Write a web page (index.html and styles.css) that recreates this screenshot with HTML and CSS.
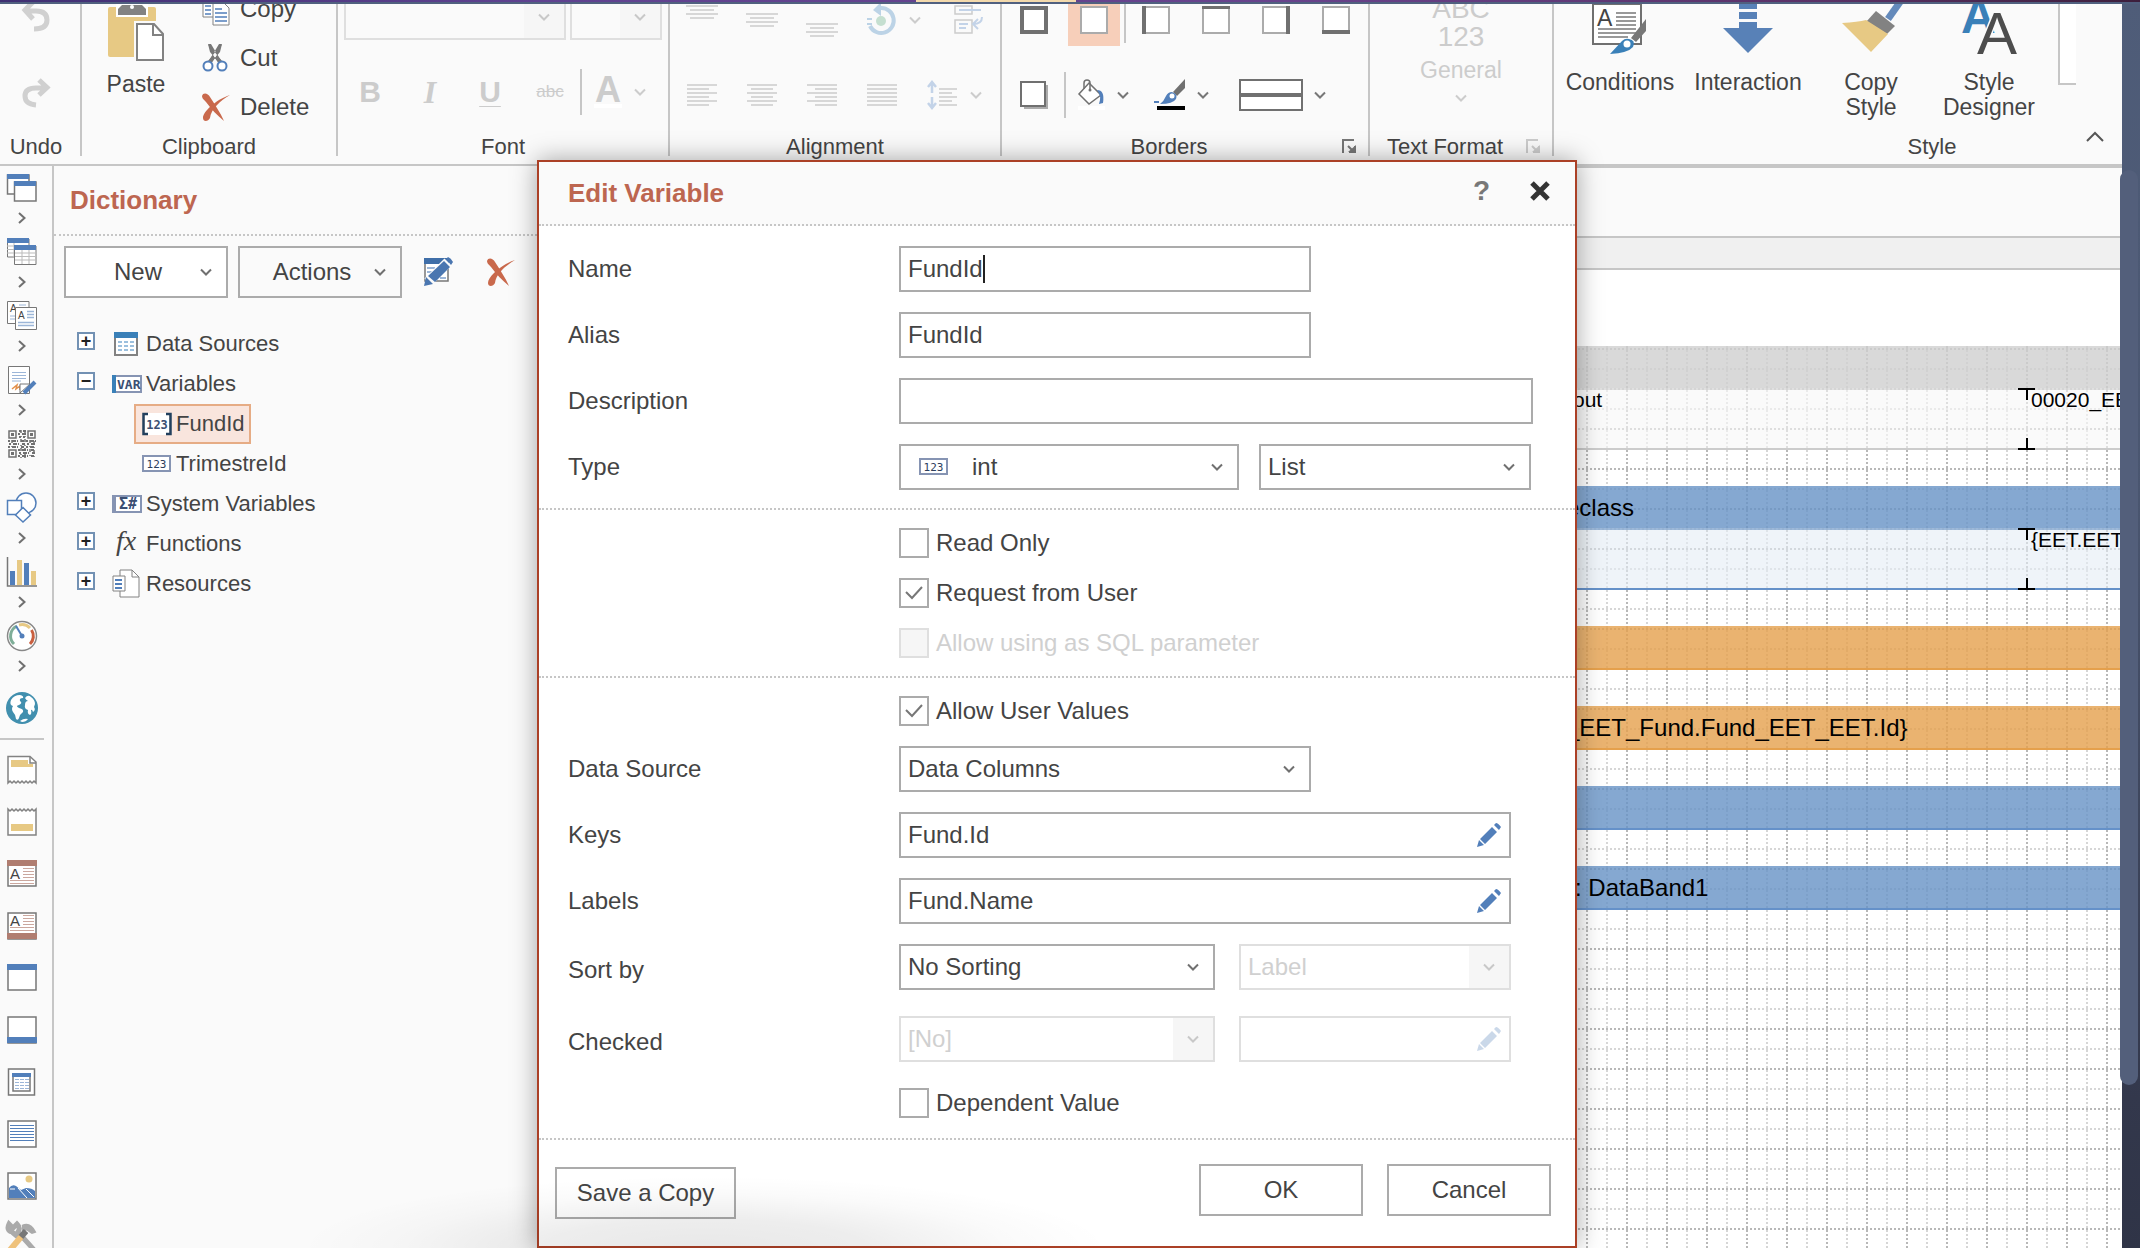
FILE: index.html
```html
<!DOCTYPE html>
<html lang="en">
<head>
<meta charset="utf-8">
<title>Report Designer</title>
<link rel="stylesheet" href="styles.css">
</head>
<body>
<svg class="defs" aria-hidden="true">
  <symbol id="down" viewBox="0 0 12 8"><path d="M1 1.500 6 6.500 11 1.500" fill="none" stroke="currentColor" stroke-width="2"/></symbol>
  <symbol id="right" viewBox="0 0 8 12"><path d="M1 1 6.500 6 1 11" fill="none" stroke="currentColor" stroke-width="2"/></symbol>
  <symbol id="cross" viewBox="0 0 28 28"><path d="M0 3C1-1 6 0 8 4 13 12 18 19 22 28 15 22 9 16 4 9 1 6 0 5 0 3Z" fill="#c9694c"/><path d="M28 2C18 8 9 16 8 25 6 29 1 29 1 25 1 19 13 7 28 2Z" fill="#c9694c"/></symbol>
  <symbol id="pencil" viewBox="0 0 24 24"><path d="M17 2 19 0Q21 0 24 4L22 7ZM15 4 20 9 8 21 3 16ZM2 17 7 22 0 24Z" fill="#527fba"/></symbol>
  <symbol id="launch" viewBox="0 0 14 14"><path d="M1 14V1H12M6 7 11 12M13 7V13H7" fill="none" stroke="currentColor" stroke-width="2"/><path d="M6 13H14V6Z" fill="currentColor"/></symbol>
  <symbol id="int" viewBox="0 0 30 18"><rect x="1" y="1" width="27" height="15" fill="#fff" stroke="#8694b3" stroke-width="2"/><text x="14.500" y="13" text-anchor="middle" font-family="DejaVu Sans Mono, monospace" font-size="11" fill="#2d3e5c">123</text></symbol>
</svg>

<div class="topline"><span class="tab-mark"></span></div>
<div class="app">
<header class="ribbon">
 <div class="groups">
  <section class="group g-undo">
    <div class="col undo-col">
      <button class="tool" aria-label="Undo" disabled><svg width="28" height="44" viewBox="0 0 28 44"><path d="M13 12 3 22 11 31M3 23H14Q25 23 25 32T12 41" fill="none" stroke="#d0d0d0" stroke-width="5"/></svg></button>
      <button class="tool" aria-label="Redo" disabled><svg width="28" height="28" viewBox="0 0 28 28"><path d="M17 1 25 8.500 17 16M25 9H14Q3 9 3 17T14 26" fill="none" stroke="#d0d0d0" stroke-width="5"/></svg></button>
    </div>
    <h2>Undo</h2>
  </section>
  <section class="group g-clip">
    <div class="row">
      <button class="big paste"><svg width="64" height="64" viewBox="0 0 64 64"><rect x="4" y="7" width="48" height="50" rx="2" fill="#e7c984"/><path d="M12 0H44V17H12Z" fill="#fff"/><path d="M14 15V9L18 5H38L42 9V15Z" fill="#828282"/><circle cx="28" cy="7" r="2" fill="#fff"/><path d="M30 21H64V64H30Z" fill="#fafafa"/><path d="M33 24H50L59 34V60H33Z" fill="#fff" stroke="#828282" stroke-width="2"/><path d="M49 24V35H59" fill="none" stroke="#828282" stroke-width="2"/></svg><span>Paste</span></button>
      <div class="col clip-col">
        <button class="tool wide"><svg width="28" height="32" viewBox="0 0 28 32"><g fill="#fff" stroke="#828282"><path d="M1 2H12L16 6V24H1Z"/><path d="M11 10H22L27 15V32H11Z"/></g><path d="M3 9H9M3 13H9M3 17H9M3 21H9M13 16H20M13 20H25M13 24H25M13 28H25" stroke="#527fba" stroke-width="1.500"/></svg>Copy</button>
        <button class="tool wide"><svg width="28" height="28" viewBox="0 0 28 28"><path d="M6 0 11 11 17 20H21L9 0ZM20 0 15 11 9 20H5L17 0Z" fill="#777"/><path d="M6 0 8 8 18 20 20 17ZM20 0 18 8 8 20 6 17Z" fill="#777"/><g fill="#fff" stroke="#527fba" stroke-width="2"><circle cx="6" cy="22" r="4.500"/><circle cx="20" cy="22" r="4.500"/></g></svg>Cut</button>
        <button class="tool wide"><svg width="28" height="28"><use href="#cross"/></svg>Delete</button>
      </div>
    </div>
    <h2>Clipboard</h2>
  </section>
  <section class="group g-font">
    <div class="row combos">
      <select class="off font-name" aria-label="Font name" disabled></select>
      <select class="off font-size" aria-label="Font size" disabled></select>
    </div>
    <div class="row cells off-tools">
      <button class="cell bold" disabled>B</button>
      <button class="cell italic" disabled>I</button>
      <button class="cell under" disabled>U</button>
      <button class="cell strike" disabled>abc</button>
      <span class="bar"></span>
      <button class="cell color" disabled><span class="letter">A</span><svg width="12" height="8"><use href="#down"/></svg></button>
    </div>
    <h2>Font</h2>
  </section>
  <section class="group g-align">
    <div class="row cells first off-tools">
      <button class="cell" aria-label="Align top" disabled><svg width="32" height="36" viewBox="0 0 32 36"><path d="M0 4H32M4 8H28M0 12H32M4 16H28" stroke="#ccc" stroke-width="1.500"/></svg></button>
      <button class="cell" aria-label="Align middle" disabled><svg width="32" height="36" viewBox="0 0 32 36"><path d="M0 12H32M4 16H28M0 20H32M4 24H28" stroke="#ccc" stroke-width="1.500"/></svg></button>
      <button class="cell" aria-label="Align bottom" disabled><svg width="32" height="36" viewBox="0 0 32 36"><path d="M0 22H32M4 26H28M0 30H32M4 34H28" stroke="#ccc" stroke-width="1.500"/></svg></button>
      <button class="cell duo" aria-label="Angle" disabled><svg width="28" height="32" viewBox="0 0 28 32"><path d="M14 4A12.500 12.500 0 1 1 3 22" fill="none" stroke="#bcd3e6" stroke-width="4"/><path d="M14-2V12L6 6ZM0 14H5V16H0ZM0 19H5V21H0Z" fill="#bcd3e6"/><circle cx="14" cy="17" r="5" fill="#c5dfd0"/></svg><svg width="12" height="8"><use href="#down"/></svg></button>
      <button class="cell" aria-label="Word wrap" disabled><svg width="30" height="30" viewBox="0 0 30 30"><path d="M1 1H18V9H1ZM1 15H18V28H1Z" fill="none" stroke="#ccc" stroke-width="1.500"/><path d="M5 5H27M5 19H14M5 23H12M28 12Q28 19 19 19M24 14 19 19 24 24" fill="none" stroke="#c3d3e8" stroke-width="2"/></svg></button>
    </div>
    <div class="row cells second off-tools">
      <button class="cell" aria-label="Align left" disabled><svg width="30" height="22" viewBox="0 0 30 22"><path d="M0 1H30M0 5H22M0 9H30M0 13H22M0 17H30M0 21H22" stroke="#ccc" stroke-width="1.500"/></svg></button>
      <button class="cell" aria-label="Align center" disabled><svg width="30" height="22" viewBox="0 0 30 22"><path d="M0 1H30M4 5H26M0 9H30M4 13H26M0 17H30M4 21H26" stroke="#ccc" stroke-width="1.500"/></svg></button>
      <button class="cell" aria-label="Align right" disabled><svg width="30" height="22" viewBox="0 0 30 22"><path d="M0 1H30M8 5H30M0 9H30M8 13H30M0 17H30M8 21H30" stroke="#ccc" stroke-width="1.500"/></svg></button>
      <button class="cell" aria-label="Justify" disabled><svg width="30" height="22" viewBox="0 0 30 22"><path d="M0 1H30M0 5H30M0 9H30M0 13H30M0 17H30M0 21H30" stroke="#ccc" stroke-width="1.500"/></svg></button>
      <button class="cell duo" aria-label="Line spacing" disabled><svg width="30" height="28" viewBox="0 0 30 28"><path d="M5 2V12M5 16V26M1 6 5 1 9 6M1 22 5 27 9 22" fill="none" stroke="#c3d3e8" stroke-width="2.500"/><path d="M12 8H30M12 12H25M12 16H30M12 20H25M12 24H30" stroke="#ccc" stroke-width="1.500"/></svg><svg width="12" height="8"><use href="#down"/></svg></button>
    </div>
    <h2>Alignment</h2>
  </section>
  <section class="group g-borders">
    <div class="row cells first">
      <button class="cell" aria-label="All borders"><svg width="28" height="28"><rect x="2" y="2" width="24" height="24" fill="#fff" stroke="#707070" stroke-width="4"/></svg></button>
      <button class="cell on" aria-label="No borders"><svg width="28" height="28"><rect x="1" y="1" width="26" height="26" fill="#fff" stroke="#ababab" stroke-width="2"/></svg></button>
      <span class="bar"></span>
      <button class="cell" aria-label="Left border"><svg width="28" height="28"><rect x="1" y="1" width="26" height="26" fill="#fff" stroke="#ababab" stroke-width="2"/><path d="M0 0H4V28H0Z" fill="#707070"/></svg></button>
      <button class="cell" aria-label="Top border"><svg width="28" height="28"><rect x="1" y="1" width="26" height="26" fill="#fff" stroke="#ababab" stroke-width="2"/><path d="M0 0H28V3H0Z" fill="#707070"/></svg></button>
      <button class="cell" aria-label="Right border"><svg width="28" height="28"><rect x="1" y="1" width="26" height="26" fill="#fff" stroke="#ababab" stroke-width="2"/><path d="M24 0H28V28H24Z" fill="#707070"/></svg></button>
      <button class="cell" aria-label="Bottom border"><svg width="28" height="28"><rect x="1" y="1" width="26" height="26" fill="#fff" stroke="#ababab" stroke-width="2"/><path d="M0 24H28V28H0Z" fill="#707070"/></svg></button>
    </div>
    <div class="row cells second">
      <button class="cell" aria-label="Shadow"><svg width="28" height="28"><path d="M4 4H28V28H4Z" fill="#ababab"/><rect x="1" y="1" width="24" height="24" fill="#fff" stroke="#707070" stroke-width="2"/></svg></button>
      <span class="bar"></span>
      <button class="cell duo fill" aria-label="Fill colour"><svg width="28" height="32" viewBox="0 0 28 32"><path d="M0 27H27V31H0Z" fill="#fff"/><path d="M11 4 23 16 11 25 1 15Z" fill="#fff" stroke="#707070" stroke-width="1.500"/><path d="M6 10V4Q6 1 9 1T12 4V11" fill="none" stroke="#707070" stroke-width="1.500"/><circle cx="12" cy="11" r="1.500" fill="#707070"/><path d="M19 11Q27 11 25 24L21 25Q24 17 19 11Z" fill="#527fba"/></svg><svg width="12" height="8"><use href="#down"/></svg></button>
      <button class="cell duo pen" aria-label="Border colour"><svg width="32" height="32" viewBox="0 0 32 32"><path d="M3 27H31V31H3Z"/><path d="M31 0V9L23 17 19 13Z" fill="#707070"/><path d="M18 13Q24 15 22 20 19 25 6 25 10 22 12 17 14 13 18 13ZM0 22H5V24H0Z" fill="#527fba"/><circle cx="18" cy="17" r="2.500" fill="#fff"/></svg><svg width="12" height="8"><use href="#down"/></svg></button>
      <button class="cell duo line-style" aria-label="Border style"><svg width="64" height="32"><rect x="1" y="1" width="62" height="30" fill="#fff" stroke="#707070" stroke-width="2"/><path d="M1 14H63V18H1Z" fill="#707070"/></svg><svg width="12" height="8"><use href="#down"/></svg></button>
    </div>
    <h2>Borders</h2>
    <button class="launch" aria-label="Border settings"><svg width="14" height="14"><use href="#launch"/></svg></button>
  </section>
  <section class="group g-format">
    <button class="format off-tools" disabled><span class="abc">ABC<br>123</span><span>General</span><svg width="12" height="8"><use href="#down"/></svg></button>
    <h2>Text Format</h2>
    <button class="launch off-tools" aria-label="Format settings" disabled><svg width="14" height="14"><use href="#launch"/></svg></button>
  </section>
  <section class="group g-style">
    <div class="row">
      <button class="big w1"><svg width="64" height="64" viewBox="0 0 64 64"><rect x="5" y="6" width="48" height="40" fill="#fff" stroke="#707070" stroke-width="2"/><text x="9" y="28" font-family="Liberation Sans, sans-serif" font-size="23" fill="#444">A</text><path d="M28 15H48M28 19H48M28 23H48M28 27H48M10 31H48M10 35H48M10 39H40" stroke="#999" stroke-width="2"/><path d="M58 21V33L48 44 43 40Z" fill="#777"/><path d="M41 41Q48 42 45 49 40 55 22 56L34 43Q37 40 41 41Z" fill="#3a80b8"/><circle cx="39" cy="46" r="3.500" fill="#fff"/></svg><span>Conditions</span></button>
      <button class="big w1"><svg width="64" height="64" viewBox="0 0 64 64"><path d="M23 0H41V11H23ZM23 14H41V21H23ZM23 24H41V30H57L32 55 7 30H23Z" fill="#5881b7"/></svg><span>Interaction</span></button>
      <button class="big w2"><svg width="64" height="64" viewBox="0 0 64 64"><path d="M49 21 61 4" stroke="#648abb" stroke-width="7"/><path d="M37 13 56 28 48 36 27 24Z" fill="#828282"/><path d="M3 25Q19 24 27 22L49 36 32 54Z" fill="#e7c984"/></svg><span>Copy<br>Style</span></button>
      <button class="big w2"><svg width="64" height="64" viewBox="0 0 64 64"><g font-family="Liberation Sans, sans-serif"><text x="4" y="35" font-size="48" font-weight="bold" fill="#3a80b8">A</text><text x="20" y="56" font-size="60" fill="#4d4d4d" stroke="#fafafa" stroke-width="3" paint-order="stroke">A</text></g></svg><span>Style<br>Designer</span></button>
      <div class="gallery"></div>
    </div>
    <h2>Style</h2>
    <button class="collapse" aria-label="Collapse ribbon"><svg width="18" height="10"><path d="M1 9 9 1 17 9" fill="none" stroke="#555" stroke-width="2"/></svg></button>
  </section>
 </div>
</header>

<div class="work">
 <nav class="toolbox" aria-label="Toolbox">
  <button class="pop" aria-label="Bands"><svg width="32" height="32"><g fill="#fff" stroke="#777" stroke-width="1.500"><path d="M1.500 3H23V22H1.500Z"/><path d="M8.500 10H30V29H8.500Z"/></g><path d="M1 2H23V7H1ZM8 9H30V14H8Z" fill="#527fba"/></svg><svg class="arr" width="8" height="12"><use href="#right"/></svg></button>
  <button class="pop" aria-label="Cross bands"><svg width="32" height="32"><g fill="#fff" stroke="#777"><path d="M1.500 3H23V21H1.500Z"/><path d="M1 10H23M1 13.500H23M1 17H23M8 6V21" stroke="#bbb"/><path d="M8.500 10H30V28.500H8.500Z"/><path d="M9 17H30M9 20.500H30M9 24H30M16 14V28M23 14V28" stroke="#bbb"/></g><path d="M1 2H23V7H1ZM8 9H30V14H8Z" fill="#527fba"/></svg><svg class="arr" width="8" height="12"><use href="#right"/></svg></button>
  <button class="pop" aria-label="Components"><svg width="32" height="32"><g font-family="Liberation Sans, sans-serif" font-size="10" fill="#444"><path d="M1.500 1.500H23V23.500H1.500Z" fill="#fff" stroke="#777"/><text x="4" y="12">A</text><path d="M13 5H20M4 16H9M4 19H9" stroke="#9cb6d8"/><path d="M9.500 7.500H30.500V29.500H9.500Z" fill="#fff" stroke="#777"/><text x="12" y="19">A</text></g><path d="M21 11.500H28M21 14.500H28M21 17.500H28M12 22.500H28M12 25.500H28" stroke="#9cb6d8" stroke-width="1.500"/></svg><svg class="arr" width="8" height="12"><use href="#right"/></svg></button>
  <button class="pop" aria-label="Signatures"><svg width="32" height="32"><path d="M2.500 2.500H23.500V29.500H2.500Z" fill="#fff" stroke="#777"/><path d="M6 8.500H20M6 11.500H20M6 14.500H20M6 17H15" stroke="#9cb6d8"/><path d="M6 25 11 21 10 25 14 22V26" fill="none" stroke="#e3904a" stroke-width="1.500"/><path d="M14 20H24L14 29Z" fill="#fff" stroke="#777"/><path d="M29 18 18 29" stroke="#527fba" stroke-width="4"/></svg><svg class="arr" width="8" height="12"><use href="#right"/></svg></button>
  <button class="pop" aria-label="Barcodes"><svg width="32" height="32"><g fill="none" stroke="#707070"><path d="M3 3H10V10H3ZM22 3H29V10H22ZM3 22H10V29H3Z" stroke-width="1.500"/><path d="M6.500 5V8M25.500 5V8M6.500 24V27" stroke-width="3"/><path stroke-width="2" stroke-dasharray="2 2 4 1 1 3 3 2" d="M13 3H20M12 6H20M13 9H19M2 13H30M3 16H30M2 19H29M12 22H30M13 25H29M12 28H30"/><path stroke-width="1.500" stroke-dasharray="3 3 1 2" d="M15 2V30M19 2V30M24 12V30M28 13V30M6 12V20"/></g></svg><svg class="arr" width="8" height="12"><use href="#right"/></svg></button>
  <button class="pop" aria-label="Shapes"><svg width="32" height="32"><g fill="#fff" stroke="#527fba" stroke-width="1.500"><circle cx="20" cy="11" r="10"/><path d="M1.500 8.500H15.500V22.500H1.500Z"/><path d="M17 15.500 24.500 23 17 30 9.500 23Z"/></g></svg><svg class="arr" width="8" height="12"><use href="#right"/></svg></button>
  <button class="pop" aria-label="Charts"><svg width="32" height="32"><path d="M4 15H9V29H4ZM18 7H23V29H18Z" fill="#527fba"/><path d="M11 4H16V29H11ZM25 15H30V29H25Z" fill="#e7c984"/><path d="M1.500 1V30H31" fill="none" stroke="#777" stroke-width="1.500"/></svg><svg class="arr" width="8" height="12"><use href="#right"/></svg></button>
  <button class="pop" aria-label="Gauges"><svg width="32" height="32"><circle cx="16" cy="16" r="14.500" fill="#fff" stroke="#888" stroke-width="1.500"/><g fill="none" stroke-width="3"><path d="M8 24A11 11 0 0 1 11 6" stroke="#7fae98"/><path d="M13 5A11 11 0 0 1 24 8" stroke="#e7c984"/><path d="M25.500 10A11 11 0 0 1 24 24" stroke="#c95f3f"/></g><path d="M10 6 16 16" stroke="#527fba" stroke-width="2"/><circle cx="16" cy="16" r="2.500" fill="#527fba"/></svg><svg class="arr" width="8" height="12"><use href="#right"/></svg></button>
  <button class="globe" aria-label="Map"><svg width="32" height="32"><circle cx="16" cy="16" r="16" fill="#418fae"/><path d="M5 8Q8 3 14 3 18 4 17 6 13 6 14 9 17 11 13 13 9 14 13 16 18 17 17 20 14 22 13 26 12 29 10 27 10 23 7 20 5 17 7 14 3 13 5 8ZM19 6Q22 2 25 5 29 8 29 12L28 15Q30 18 27 20 26 17 25 18 26 22 24 23 21 22 22 18 18 17 19 13 19 9 22 9 20 8 19 6ZM14 29 Q18 26 22 27 20 30 16 30Z" fill="#fff"/></svg></button>
  <hr>
  <button class="one" aria-label="Report title"><svg width="32" height="32"><path d="M2 29 4 27 6 29 8 27 10 29 12 27 14 29 16 27 18 29 20 27 22 29 24 27 26 29 28 27 30 29V8L24 2.500H2Z" fill="#fff" stroke="#828282" stroke-width="1.500"/><path d="M5 6H22V10H27V13H5Z" fill="#e7c984"/><path d="M24 3V9H30" fill="none" stroke="#828282" stroke-width="1.500"/></svg></button>
  <button class="one" aria-label="Report summary"><svg width="32" height="32"><path d="M2 3 4 5 6 3 8 5 10 3 12 5 14 3 16 5 18 3 20 5 22 3 24 5 26 3 28 5 30 3V29H2Z" fill="#fff" stroke="#828282" stroke-width="1.500"/><path d="M5 18H27V25H5Z" fill="#e7c984"/></svg></button>
  <button class="one" aria-label="Page header"><svg width="32" height="32"><path d="M2 3H30V28H2Z" fill="#fff" stroke="#777" stroke-width="1.500"/><path d="M1 2H31V8H1Z" fill="#b07d70"/><text x="4" y="21" font-family="Liberation Sans, sans-serif" font-size="15" fill="#444">A</text><path d="M17 10.500H28M17 13.500H28M17 16.500H28M17 19.500H28M4 22.500H28M4 25.500H28" stroke="#cba79e"/></svg></button>
  <button class="one" aria-label="Page footer"><svg width="32" height="32"><path d="M2 3H30V29H2Z" fill="#fff" stroke="#777" stroke-width="1.500"/><path d="M1 23H31V29H1Z" fill="#b07d70"/><text x="4" y="16" font-family="Liberation Sans, sans-serif" font-size="15" fill="#444">A</text><path d="M17 5.500H28M17 8.500H28M17 11.500H28M17 14.500H28M4 17.500H28M4 20.500H28" stroke="#cba79e"/></svg></button>
  <button class="one" aria-label="Header band"><svg width="32" height="32"><path d="M2 3H30V28H2Z" fill="#fff" stroke="#777" stroke-width="1.500"/><path d="M1 2H31V8H1Z" fill="#527fba"/></svg></button>
  <button class="one" aria-label="Footer band"><svg width="32" height="32"><path d="M2 3H30V29H2Z" fill="#fff" stroke="#777" stroke-width="1.500"/><path d="M1 23H31V29H1Z" fill="#527fba"/></svg></button>
  <button class="one" aria-label="Data band"><svg width="32" height="32"><path d="M2.500 3H28.500V29H2.500Z" fill="#fff" stroke="#777" stroke-width="1.500"/><path d="M7 8H24V25H7Z" fill="#fff" stroke="#777" stroke-width="1.500"/><path d="M6 7H25V11H6Z" fill="#527fba"/><path d="M9 13.500H23M9 16.500H23M9 19.500H23M9 22.500H23" stroke="#9cb6d8" stroke-dasharray="4 1"/></svg></button>
  <button class="one" aria-label="Text"><svg width="32" height="32"><path d="M2 3H30V29H2Z" fill="#fff" stroke="#777" stroke-width="1.500"/><path d="M4 7.500H28M4 10.500H28M4 13.500H28M4 16.500H28M4 19.500H28M4 22.500H28" stroke="#527fba"/></svg></button>
  <button class="one" aria-label="Image"><svg width="32" height="32"><path d="M2 3H30V29H2Z" fill="#fff" stroke="#777" stroke-width="1.500"/><circle cx="23" cy="9" r="3.500" fill="#e7c984"/><path d="M3 18Q6 14 10 16L15 20 20 18Q26 18 29 21V28H3Z" fill="#527fba"/><path d="M4 19H9M12 18 21 28M20 19 28 27" stroke="#fff"/></svg></button>
  <button class="one" aria-label="Setup"><svg width="32" height="32"><path d="M12 15 6 10Q0 8 3 2L7 6 11 2Q15 6 12 10L29 29" fill="none" stroke="#aaa" stroke-width="5"/><path d="M16 4Q24 0 29 10L26 11 20 7 16 14" fill="#aaa" stroke="#aaa" stroke-width="2"/><path d="M20 9 14 16" stroke="#777" stroke-width="6"/><path d="M15 15 4 28" stroke="#efc27c" stroke-width="6"/></svg></button>
 </nav>

 <aside class="dictionary">
  <h1 class="panel-title">Dictionary</h1>
  <div class="actions">
    <button class="drop filled"><span>New</span><svg width="12" height="8"><use href="#down"/></svg></button>
    <button class="drop"><span>Actions</span><svg width="12" height="8"><use href="#down"/></svg></button>
    <button class="icon" aria-label="Edit"><svg width="30" height="28"><path d="M1 1H24V23H1Z" fill="#fff" stroke="#777" stroke-width="1.500"/><path d="M0 0H25V6H0Z" fill="#3f6ea8"/><path d="M3 10H11M3 14H9M16 20H22" stroke="#9cb6d8" stroke-width="2"/><path d="M24 4 4 24" stroke="#fafafa" stroke-width="10"/><path d="M22 1 24-1Q27 0 29 4L27 7ZM20 3 26 9 11 24 4 18ZM2 19 9 26 0 28Z" fill="#4a76b0"/></svg></button>
    <button class="icon" aria-label="Delete item"><svg width="28" height="28"><use href="#cross"/></svg></button>
  </div>
  <ul class="tree">
    <li><button class="tog" aria-label="Expand">+</button><svg width="30" height="26"><path d="M3 2H25V24H3Z" fill="#fff" stroke="#828282" stroke-width="2"/><path d="M2 1H26V7H2Z" fill="#3a80b8"/><path d="M6 11H22M6 15H22M6 19H22" stroke="#9cc0de" stroke-width="2" stroke-dasharray="4 2"/></svg>Data Sources</li>
    <li><button class="tog" aria-label="Collapse">−</button><svg width="30" height="20"><path d="M1 2H29V18H1Z" fill="#fff" stroke="#8694b3" stroke-width="2"/><path d="M0 1H4V19H0Z" fill="#3a80b8"/><text x="5" y="15" font-family="DejaVu Sans Mono, monospace" font-weight="bold" font-size="13" fill="#3b4f73">VAR</text></svg>Variables</li>
    <li class="sub"><span class="leaf picked"><svg width="30" height="24"><path d="M3 1H27V23H3Z" fill="#fff"/><path d="M6 2H1.500V22H6M24 2H28.500V22H24" fill="none" stroke="#22405e" stroke-width="2.500"/><text x="15" y="17" text-anchor="middle" font-family="DejaVu Sans Mono, monospace" font-weight="bold" font-size="12" fill="#3b4f73">123</text></svg>FundId</span></li>
    <li class="sub"><span class="leaf"><svg width="30" height="18"><use href="#int"/></svg>TrimestreId</span></li>
    <li><button class="tog" aria-label="Expand">+</button><svg width="30" height="20"><path d="M1 2H29V18H1Z" fill="#fff" stroke="#8694b3" stroke-width="2"/><path d="M0 1H4V19H0Z" fill="#8694b3"/><text x="7" y="15" font-family="DejaVu Sans Mono, monospace" font-weight="bold" font-size="15" fill="#3b4f73">Σ#</text></svg>System Variables</li>
    <li><button class="tog" aria-label="Expand">+</button><svg width="30" height="28"><text x="4" y="20" font-family="Liberation Serif, serif" font-style="italic" font-size="28" fill="#444">fx</text></svg>Functions</li>
    <li><button class="tog" aria-label="Expand">+</button><svg width="30" height="30"><path d="M8 1H20L27 8V28H8Z" fill="#fff" stroke="#828282"/><path d="M20 1V8H27" fill="none" stroke="#828282"/><path d="M1 7H13V22H1Z" fill="#fff" stroke="#828282"/><path d="M3 11H10M3 15H10M3 19H10" stroke="#527fba" stroke-width="2"/></svg>Resources</li>
  </ul>
 </aside>

 <main class="designer">
  <div class="tabs"></div>
  <div class="ruler"></div>
  <div class="report">
    <section class="band gray"><h3 class="open"></h3><div class="body"><div class="lead">out</div><div class="marked">00020_EET</div></div></section>
    <section class="band blue"><h3 class="open">eclass</h3><div class="body"><div class="lead"></div><div class="marked">{EET.EET</div></div></section>
    <section class="band orange"><h3></h3></section>
    <section class="band orange"><h3>_EET_Fund.Fund_EET_EET.Id}</h3></section>
    <section class="band blue"><h3></h3></section>
    <section class="band blue"><h3 class="indent">: DataBand1</h3></section>
  </div>
 </main>
</div>
</div>
<div class="scroll-thumb"></div>

<form class="dialog" role="dialog" aria-labelledby="dlg-title">
  <header class="dlg-head">
    <h1 id="dlg-title" class="panel-title">Edit Variable</h1>
    <button type="button" class="help" aria-label="Help">?</button>
    <button type="button" class="close" aria-label="Close"><svg width="20" height="20"><path d="M2 2 18 18M18 2 2 18" stroke="#333" stroke-width="5"/></svg></button>
  </header>
  <section class="part">
    <div class="line"><label for="name">Name</label><span class="box mid caret-box"><input id="name" value="FundId"><i class="caret"></i></span></div>
    <div class="line"><label for="alias">Alias</label><span class="box mid"><input id="alias" value="FundId"></span></div>
    <div class="line"><label for="desc">Description</label><span class="box full"><input id="desc"></span></div>
    <div class="line"><label for="type">Type</label><span class="pair"><span class="typed"><svg width="30" height="18"><use href="#int"/></svg><select id="type"><option>int</option></select></span><select class="w-small" aria-label="Kind"><option>List</option></select></span></div>
  </section>
  <section class="part checks">
    <label class="check"><input type="checkbox">Read Only</label>
    <label class="check"><input type="checkbox" checked>Request from User</label>
    <label class="check muted"><input type="checkbox" disabled>Allow using as SQL parameter</label>
  </section>
  <section class="part values">
    <label class="check"><input type="checkbox" checked>Allow User Values</label>
    <div class="line"><label for="src">Data Source</label><select id="src" class="mid"><option>Data Columns</option></select></div>
    <div class="line"><label for="keys">Keys</label><span class="box long"><input id="keys" value="Fund.Id"><button type="button" aria-label="Edit keys"><svg width="24" height="24"><use href="#pencil"/></svg></button></span></div>
    <div class="line"><label for="labels">Labels</label><span class="box long"><input id="labels" value="Fund.Name"><button type="button" aria-label="Edit labels"><svg width="24" height="24"><use href="#pencil"/></svg></button></span></div>
    <div class="line tall"><label for="sort">Sort by</label><span class="pair wide-gap"><select id="sort" class="w-sort"><option>No Sorting</option></select><select class="w-small off" aria-label="Sort field" disabled><option>Label</option></select></span></div>
    <div class="line tall"><label for="checked">Checked</label><span class="pair wide-gap"><select id="checked" class="w-sort off" disabled><option>[No]</option></select><span class="box w-small muted"><input aria-label="Checked value" disabled><button type="button" aria-label="Edit checked" disabled><svg width="24" height="24"><use href="#pencil"/></svg></button></span></span></div>
    <label class="check"><input type="checkbox">Dependent Value</label>
  </section>
  <footer class="dlg-foot">
    <button type="button" class="save">Save a Copy</button>
    <div class="confirm"><button type="submit">OK</button><button type="button">Cancel</button></div>
  </footer>
</form>
<div class="haze"></div>
</body>
</html>
```

FILE: styles.css
```css
* { box-sizing: border-box; }
body {
  margin: 0;
  height: 100vh;
  display: flex;
  flex-direction: column;
  overflow: hidden;
  position: relative;
  font: 24px/28px "Liberation Sans", Arial, sans-serif;
  color: #444;
  background: linear-gradient(#4f5d79 0, #4a5670 40%, #33384c 88%, #2f3447);
}
button, input, select { font: inherit; color: inherit; margin: 0; }
button { background: none; border: 0; padding: 0; display: flex; align-items: center; justify-content: center; }
h1, h2, h3, ul { margin: 0; padding: 0; font-weight: normal; }
svg { flex: none; display: block; overflow: visible; }
.defs { position: absolute; width: 0; height: 0; }

.topline {
  flex: none;
  height: 4px;
  border-bottom: 2px solid #50607f;
  background: linear-gradient(90deg, #3f2f72, #5f4290 25%, #68438c 60%, #5a3166 85%, #3d1f3c);
}
.tab-mark { display: block; width: 160px; height: 2px; margin-left: 916px; background: #f3d9ac; }

.app { flex: 1; min-height: 0; display: flex; flex-direction: column; margin-right: 18px; background: #fafafa; overflow: hidden; }

/* Ribbon */
.ribbon { flex: none; padding-bottom: 8px; border-bottom: 2px solid #c6c6c6; overflow: hidden; }
.groups { display: flex; margin-top: -24px; }
.group {
  height: 176px;
  flex: none;
  display: grid;
  grid-template-columns: 1fr auto;
  grid-template-rows: auto 1fr 20px;
  border-right: 2px solid #c6c6c6;
}
.group > * { grid-column: 1 / -1; }
.group > h2 { grid-row: 3; grid-column: 1; font-size: 22px; line-height: 22px; text-align: center; }
.row { display: flex; align-items: flex-start; }
.col { display: flex; flex-direction: column; align-items: flex-start; }
.off-tools, .off-tools button { color: #ccc; }
.group > .launch { grid-row: 3; grid-column: 2; width: 24px; height: 20px; justify-content: flex-start; }
.g-borders > .launch { color: #777; }
.bar { width: 2px; height: 46px; background: #c6c6c6; }

.g-undo { width: 82px; }
.g-undo > h2 { padding-right: 8px; }
.undo-col { padding: 8px 0 0 22px; gap: 47px; }
.g-clip { width: 256px; }
.big { flex-direction: column; font-size: 23px; line-height: 25px; gap: 8px; }
.paste { width: 108px; margin-top: 20px; }
.clip-col { padding: 4px 0 0 12px; }
.tool.wide { height: 49px; gap: 10px; }

.g-font { width: 332px; }
.combos { gap: 4px; padding: 14px 6px 0; }
.font-name { flex: 1; }
.font-size { width: 92px; }
.cells { align-items: center; }
.cell { width: 60px; height: 52px; }
.g-font .cells { padding-left: 2px; grid-row: 2; align-self: start; padding-top: 26px; }
.bold { font-weight: bold; font-size: 30px; }
.italic { font: italic bold 32px "Liberation Serif", serif; }
.under { font-weight: bold; font-size: 30px; text-decoration: underline; text-decoration-thickness: 1px; text-underline-offset: 4px; }
.strike { font-size: 17px; text-decoration: line-through; }
.color { width: auto; padding-left: 12px; gap: 12px; }
.letter { font-weight: bold; font-size: 36px; border-bottom: 4px solid #fff; width: 28px; text-align: center; }

.g-align { width: 332px; }
.g-borders { width: 368px; }
.g-align .cells, .g-borders .cells { padding-left: 2px; }
.first { padding-top: 14px; }
.second { grid-row: 2; align-self: start; padding-top: 23px; }
.duo { width: auto; gap: 15px; }
.g-align .first .duo { gap: 14px; padding: 0 18px 0 15px; }
.g-align .second .duo { padding-left: 15px; gap: 13px; }
.on { width: 52px; background: #f7cfba; margin: 0 4px; }
.g-borders .second { color: #777; }
.g-borders .duo { gap: 11px; }
.fill { padding-left: 12px; }
.pen { padding-left: 25px; }
.line-style { padding-left: 30px; }

.g-format { width: 184px; }
.g-borders > .launch, .g-format > .launch { width: 26px; }
.g-borders > h2, .g-format > h2 { padding-right: 6px; }
.format { flex-direction: column; grid-row: 1; font-size: 23px; line-height: 25px; padding-top: 15px; }
.abc { font-size: 28px; line-height: 28px; margin-bottom: 7px; }
.format svg { margin-top: 11px; }
.g-style { flex: 1; border-right: 0; min-width: 0; }
.g-style .row { padding: 18px 0 0 2px; }
.g-style > h2 { padding-left: 224px; }
.w1 { width: 128px; }
.w2 { width: 118px; }
.gallery { width: 18px; height: 87px; margin-left: 10px; border: solid #c6c6c6; border-width: 0 0 2px 2px; background: #fff; }
.group > .collapse { grid-row: 3; grid-column: 2; width: 36px; height: 10px; justify-content: flex-start; margin-top: -4px; }

/* Work area */
.work { flex: 1; min-height: 0; display: flex; }
.toolbox { flex: none; width: 54px; padding-top: 6px; border-right: 2px solid #c6c6c6; color: #707070; }
.toolbox button { width: 44px; }
.pop { height: 64px; flex-direction: column; justify-content: flex-start; gap: 8px; }
.globe { margin: 8px 0 14px; }
.toolbox hr { width: 44px; height: 2px; margin: 0 0 4px; border: 0; background: #c6c6c6; }
.one { height: 52px; }

.panel-title { font-size: 26px; line-height: 30px; font-weight: bold; color: #bd6650; }
.dictionary { flex: none; width: 483px; }
.dictionary .panel-title { padding: 19px 16px; border-bottom: 2px dotted #c6c6c6; }
.actions { display: flex; align-items: center; gap: 10px; padding: 10px; color: #444; }
.drop { width: 164px; height: 52px; border: 2px solid #ababab; padding: 0 14px 0 10px; }
.drop span { flex: 1; }
.drop svg { color: #707070; }
.filled { background: #fff; }
.icon { margin-left: 12px; }
.icon + .icon { margin-left: 23px; }
.tree { list-style: none; padding: 16px 0 0 23px; font-size: 22px; }
.tree li { height: 40px; display: flex; align-items: center; }
.tree svg { margin-right: 4px; }
.tog { width: 18px; height: 18px; margin: 0 17px 6px 0; border: 2px solid #7291b3; background: #fff; font: bold 18px/14px "Liberation Sans", sans-serif; color: #222; }
.tree .sub { padding-left: 57px; }
.leaf { height: 40px; display: flex; align-items: center; padding: 0 4px 0 6px; border: 2px solid transparent; }
.picked { border-color: #e6ac85; background: #f9e5dd; }

.designer { flex: 1; min-width: 0; display: flex; flex-direction: column; border-top: 2px solid #c6c6c6; }
.tabs { height: 70px; border-bottom: 2px solid #c6c6c6; }
.ruler { height: 32px; background: #f0f0f0; border-bottom: 2px solid #c6c6c6; }
.report {
  flex: 1;
  display: flex;
  flex-direction: column;
  gap: 36px;
  color: #000;
  margin-left: 1029px;
  padding-top: 76px;
  background:
    linear-gradient(#fff, #fff) 0 0 / 100% 76px no-repeat,
    conic-gradient(at 2px 2px, transparent 75%, #b8b8b8 0) 20px 0 / 40px 4px,
    conic-gradient(at 2px 2px, transparent 75%, #d6d6d6 0) 0 0 / 40px 4px,
    conic-gradient(at 2px 2px, transparent 75%, #b8b8b8 0) 0 38px / 4px 40px,
    conic-gradient(at 2px 2px, transparent 75%, #d6d6d6 0) 0 18px / 4px 40px,
    #fff;
}
.band h3 { height: 44px; font-size: 24px; line-height: 44px; background: var(--head); border-bottom: 2px solid var(--edge); white-space: nowrap; }
.band .open { border-bottom-color: rgba(255, 255, 255, .2); }
.gray { --head: rgba(208, 208, 208, .8); --edge: #e2e2e2; --tint: rgba(246, 246, 246, .6); --end: #ccc; }
.blue { --head: rgba(102, 146, 198, .8); --edge: #6591c9; --tint: rgba(229, 237, 245, .6); --end: #6591c9; }
.orange { --head: rgba(229, 160, 76, .8); --edge: #e5a04c; }
.indent { padding-left: 9px; }
.body { height: 60px; display: flex; background: var(--tint); border-bottom: 2px solid var(--end); font-size: 21px; line-height: 20px; }
.lead { width: 461px; padding-left: 7px; }
.marked { flex: 1; min-width: 0; position: relative; padding-left: 4px; white-space: nowrap; }
.marked::before, .marked::after { content: ""; position: absolute; left: -9px; width: 17px; height: 10px; background: linear-gradient(#000, #000) 8px 0 / 2px 10px no-repeat; }
.marked::before { top: -2px; border-top: 2px solid #000; }
.marked::after { bottom: -2px; border-bottom: 2px solid #000; }

.scroll-thumb { position: absolute; top: 170px; right: 2px; bottom: 163px; width: 18px; border-radius: 9px; background: #535f7b; }

/* Dialog */
.dialog { position: absolute; top: 160px; left: 537px; right: 563px; border: 2px solid #ab4026; background: #fff; box-shadow: 0 0 24px rgba(0, 0, 0, .35); }
.dlg-head { display: flex; align-items: center; height: 64px; padding: 0 25px 0 29px; background: #fafafa; border-bottom: 2px dotted #c6c6c6; }
.dlg-head h1 { flex: 1; }
.help { font-weight: bold; font-size: 28px; color: #777; margin: 0 40px 4px 0; }
.close { margin-bottom: 4px; }
.part { display: flex; flex-direction: column; gap: 20px; padding: 20px 29px 18px; border-bottom: 2px dotted #c6c6c6; }
.line { display: grid; grid-template-columns: 331px 1fr; align-items: center; }
.checks { padding-top: 18px; }
.values { padding-top: 18px; padding-bottom: 20px; }
.tall { min-height: 52px; }
.tall .pair { align-self: start; }
.box { display: flex; align-items: center; height: 46px; border: 2px solid #ababab; background: #fff; }
.box input { flex: 1; min-width: 0; border: 0; outline: 0; padding: 0 7px; background: none; }
.box button { margin-right: 8px; }
.mid { width: 412px; }
.full { width: 634px; }
.long { width: 612px; }
.pair { display: flex; gap: 20px; }
.wide-gap { gap: 24px; }
.w-small { width: 272px; }
.w-sort { width: 316px; }
.caret-box { position: relative; }
.caret { position: absolute; left: 82px; top: 7px; width: 2px; height: 28px; background: #222; }
select {
  appearance: none;
  height: 46px;
  padding: 0 42px 0 7px;
  border: 2px solid #ababab;
  border-radius: 0;
  background: url("data:image/svg+xml,%3Csvg xmlns='http://www.w3.org/2000/svg' width='12' height='8'%3E%3Cpath d='M1 1.500 6 6.500 11 1.500' fill='none' stroke='%23707070' stroke-width='2'/%3E%3C/svg%3E") right 14px center no-repeat #fff;
}
select.off {
  opacity: 1;
  color: #d0d0d0;
  border-color: #dfdfdf;
  background:
    url("data:image/svg+xml,%3Csvg xmlns='http://www.w3.org/2000/svg' width='12' height='8'%3E%3Cpath d='M1 1.500 6 6.500 11 1.500' fill='none' stroke='%23c8c8c8' stroke-width='2'/%3E%3C/svg%3E") right 14px center no-repeat,
    linear-gradient(#f6f6f6, #f6f6f6) right / 40px 100% no-repeat #fff;
}
.ribbon select.off { background-color: #fafafa; min-width: 0; padding-right: 0; }
.typed { position: relative; width: 340px; }
.typed svg { position: absolute; left: 20px; top: 14px; }
.typed select { width: 100%; padding-left: 71px; }
.muted { color: #d0d0d0; }
.box.muted { border-color: #dfdfdf; }
.box.muted svg { opacity: .3; }
.check { display: flex; align-items: center; gap: 7px; height: 30px; margin-left: 331px; }
.check input {
  appearance: none;
  width: 30px;
  height: 30px;
  border: 2px solid #ababab;
  background: #fff center no-repeat;
}
.check input:checked { background-image: url("data:image/svg+xml,%3Csvg xmlns='http://www.w3.org/2000/svg' width='18' height='14'%3E%3Cpath d='M1 6 7 12 17 1' fill='none' stroke='%23777' stroke-width='2'/%3E%3C/svg%3E"); }
.check input:disabled { border-color: #dfdfdf; background-color: #f6f6f6; }
.dlg-foot { display: flex; justify-content: space-between; align-items: center; padding: 24px 24px 24px 16px; }
.dlg-foot button { height: 52px; border: 2px solid #ababab; }
.save { width: 181px; }
.confirm { display: flex; gap: 24px; padding-bottom: 6px; }
.confirm button { width: 164px; }

/* Shadow that rises over the lower edge of the window */
.haze {
  position: absolute;
  left: 300px;
  bottom: 0;
  width: 810px;
  height: 72px;
  pointer-events: none;
  background: radial-gradient(ellipse 50% 100% at 50% 100%, rgba(0, 0, 0, .09), rgba(0, 0, 0, .07) 40%, rgba(0, 0, 0, .02) 75%, transparent);
}
```
